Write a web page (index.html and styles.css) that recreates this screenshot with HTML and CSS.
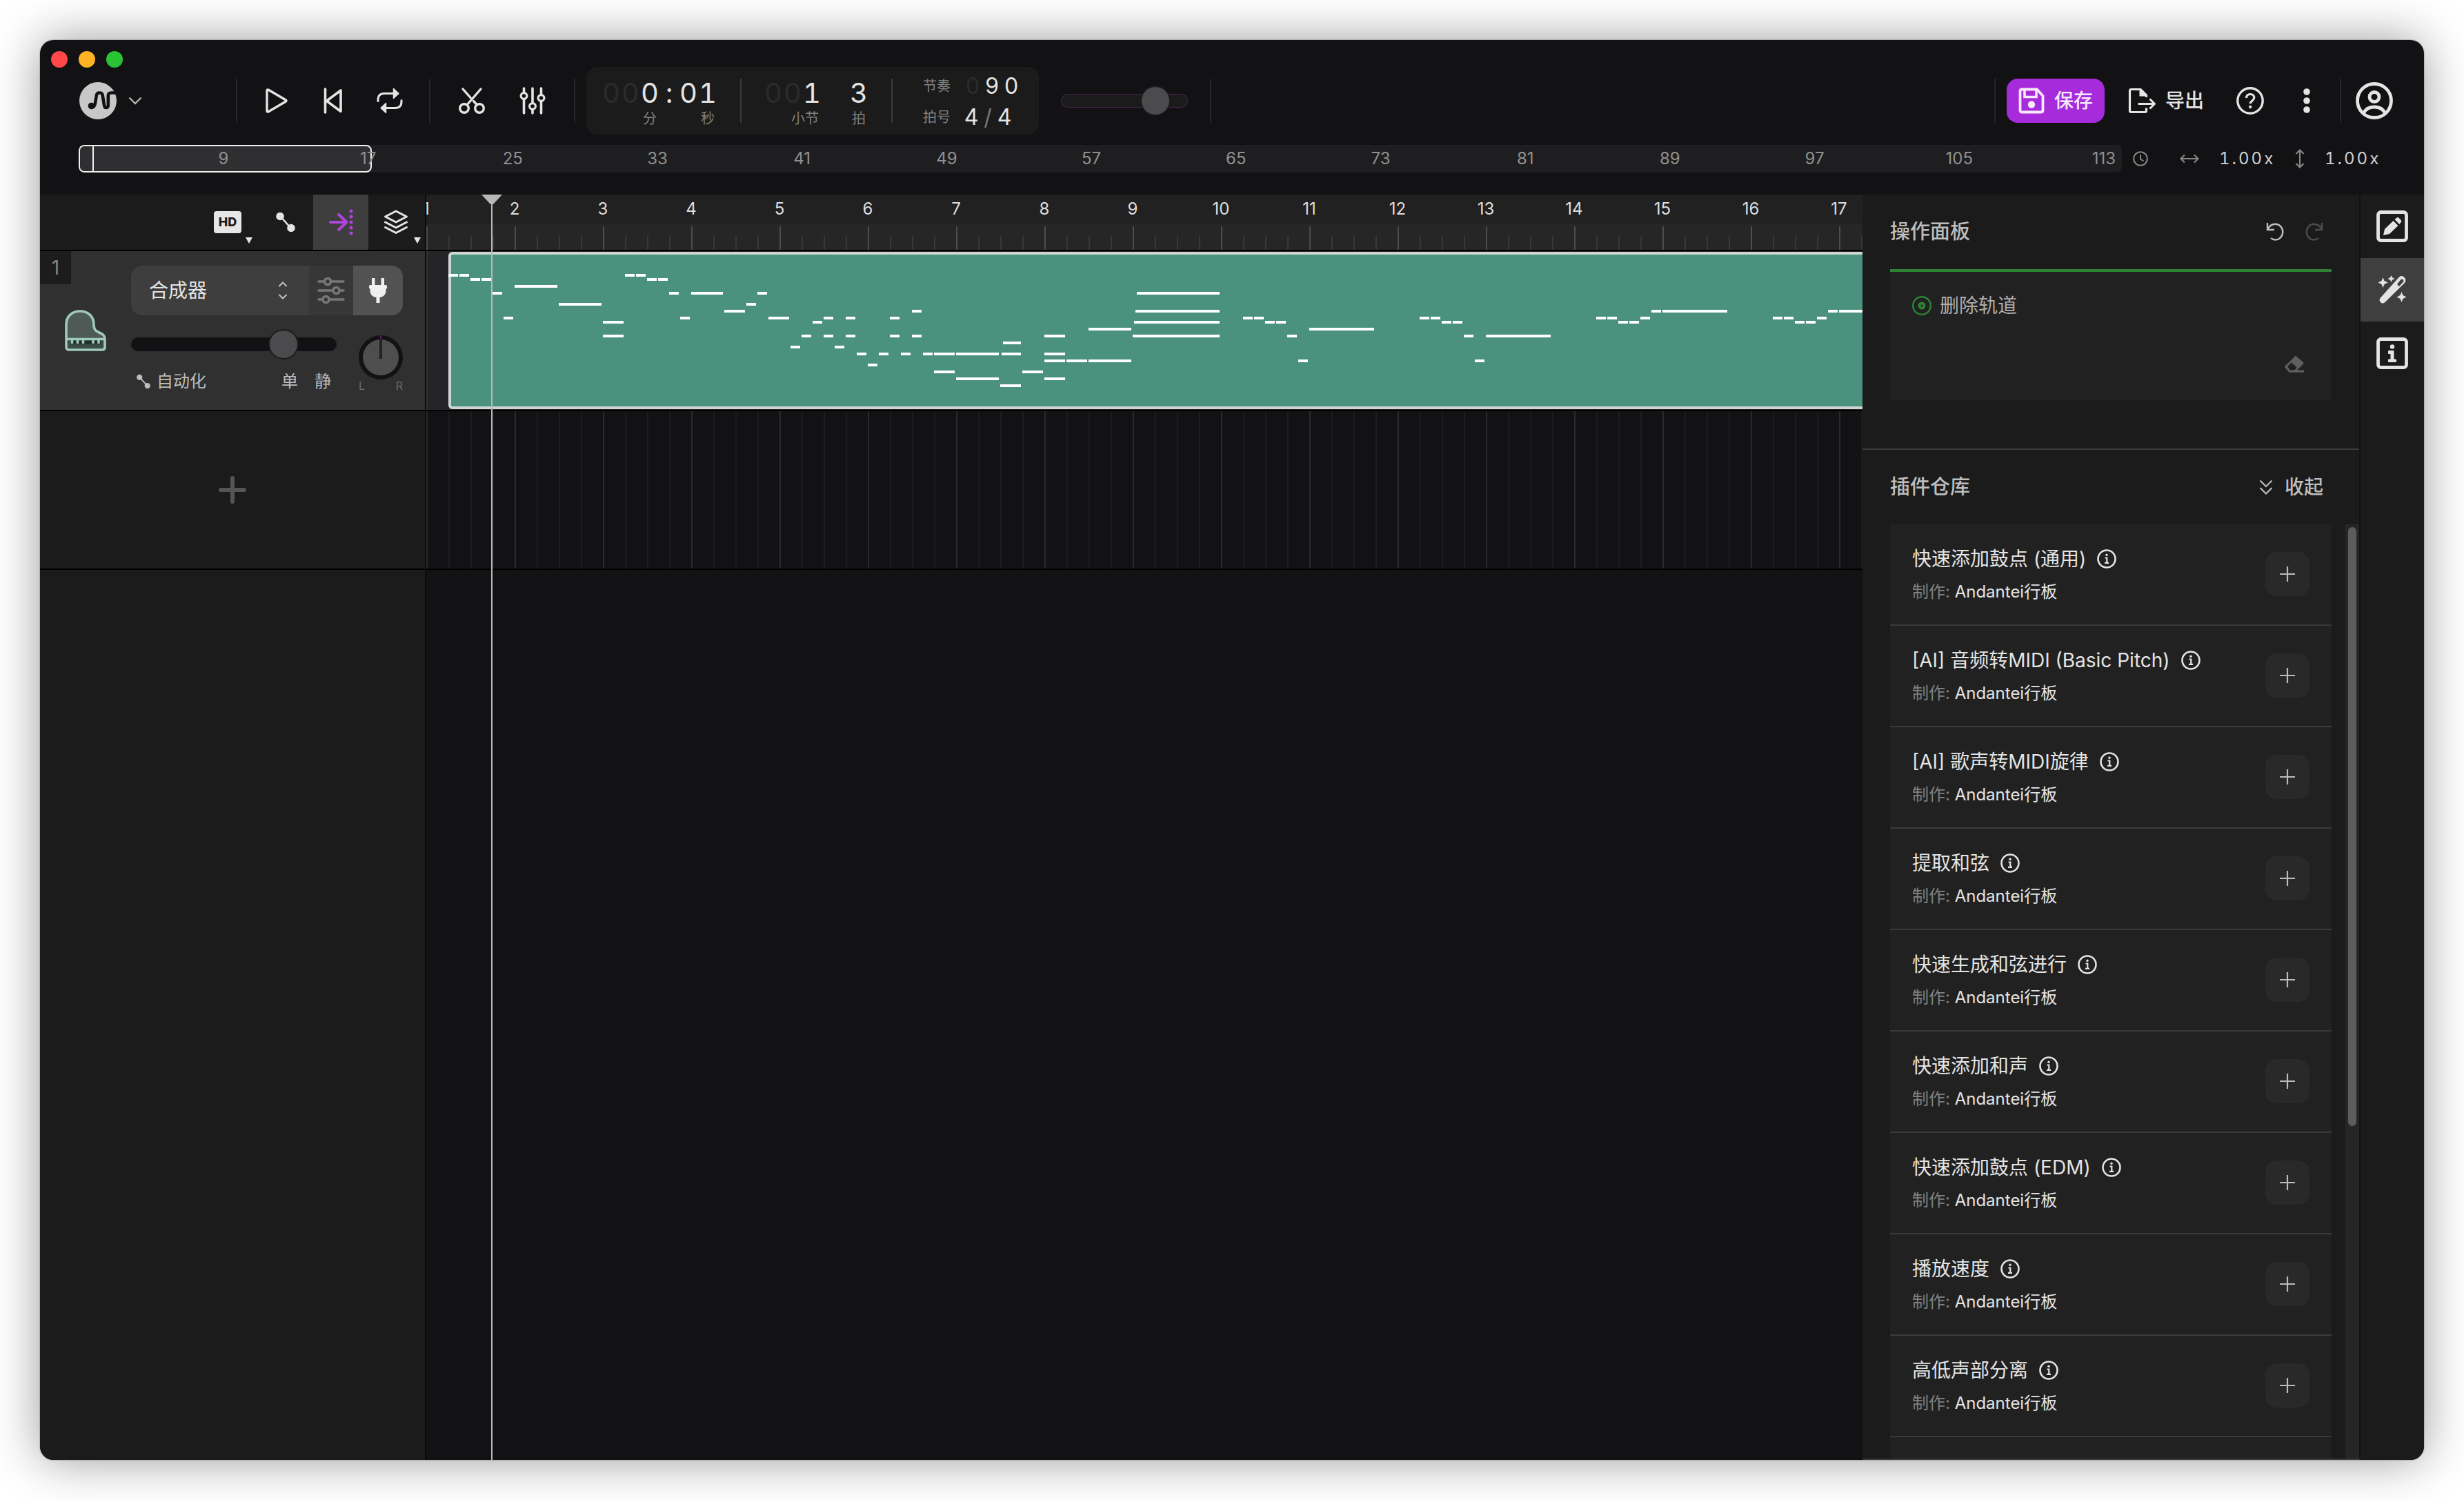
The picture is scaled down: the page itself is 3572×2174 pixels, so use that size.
FILE: index.html
```html
<!DOCTYPE html>
<html lang="zh-CN">
<head>
<meta charset="utf-8">
<title>Studio</title>
<link rel="stylesheet" href="styles.css">
</head>
<body>
<svg width="0" height="0" class="defs" aria-hidden="true">
  <symbol id="i-info" viewBox="0 0 28 28"><circle cx="14" cy="14" r="12.500" fill="none" stroke="currentColor" stroke-width="2.600"/><circle cx="14" cy="8.200" r="1.700" fill="currentColor"/><path d="M11.500 12.500h2.800v7M11 19.800h6" fill="none" stroke="currentColor" stroke-width="2.200"/></symbol>
  <symbol id="i-plus" viewBox="0 0 22 22"><path d="M11 0v22M0 11h22" stroke="currentColor" stroke-width="2.200"/></symbol>
  <symbol id="i-auto" viewBox="0 0 28 30"><path d="M6 6l16 18" stroke="currentColor" stroke-width="2.600"/><circle cx="6" cy="6.500" r="5.800" fill="currentColor"/><circle cx="22" cy="23.500" r="5.800" fill="currentColor"/></symbol>
</svg>
<div class="window">
  <header class="header">
    <div class="lights"><span class="light red"></span><span class="light amber"></span><span class="light green"></span></div>
    <div class="toolbar">
      <button class="brand" aria-label="菜单">
        <svg width="54" height="54" viewBox="0 0 54 54"><circle cx="27" cy="27" r="27" fill="#c8c8c8"/><circle cx="17.500" cy="34.500" r="4.800" fill="#121214"/><path d="M18 36.500c3 0 4.500-2.500 5-6l1.800-11c.5-3 1.600-4 4.500-4s4 1 4.500 4l2.200 14c.3 2.500 1.200 3.500 3 3.500s2.800-1 2.800-3.500V20c0-3.300 1.200-4.500 4.500-4.500H54" fill="none" stroke="#121214" stroke-width="4.600"/></svg>
        <svg width="20" height="12" viewBox="0 0 20 12"><path d="M1.500 1.500L10 10l8.500-8.500" fill="none" stroke="#b4b4b4" stroke-width="2.400"/></svg>
      </button>
      <i class="rule"></i>
      <div class="group transport">
        <button aria-label="播放"><svg width="34" height="38" viewBox="0 0 34 38"><path d="M3 4.500v29q0 2.500 2.300 1.200L30 20.200q2-1.200 0-2.400L5.300 3.300Q3 2 3 4.500z" fill="none" stroke="currentColor" stroke-width="3.400" stroke-linejoin="round"/></svg></button>
        <button aria-label="回到开头"><svg width="28" height="38" viewBox="0 0 28 38"><path d="M2.500 2v34M25 4v30.500L4.500 19.200z" fill="none" stroke="currentColor" stroke-width="3.600" stroke-linejoin="round" stroke-linecap="round"/></svg></button>
        <button aria-label="循环"><svg width="38" height="38" viewBox="0 0 38 38"><g id="half"><path d="M2 19.500V18c0-6 3-9.500 9-9.500h14" fill="none" stroke="currentColor" stroke-width="3" stroke-linecap="round"/><path d="M24.500 1.500L32 8.500l-7.500 7z" fill="currentColor" stroke="currentColor" stroke-width="1.500" stroke-linejoin="round"/></g><use href="#half" transform="rotate(180 19 19)"/></svg></button>
      </div>
      <i class="rule"></i>
      <div class="group tools">
        <button aria-label="剪切"><svg width="38" height="40" viewBox="0 0 38 40"><g fill="none" stroke="currentColor" stroke-width="3.400" stroke-linecap="round"><circle cx="8" cy="31" r="6.300"/><circle cx="30" cy="31" r="6.300"/><path d="M12 26L32 3M6 3l11 12.500M21.500 20.500l5 5.500"/></g></svg></button>
        <button aria-label="混音器"><svg width="38" height="40" viewBox="0 0 38 40"><g stroke="currentColor" stroke-width="3.600" stroke-linecap="round"><path d="M6.500 2v36M19 2v36M31.500 2v36"/><g fill="#121214" stroke-width="3.200"><circle cx="6.500" cy="13" r="4.400"/><circle cx="19" cy="28" r="4.400"/><circle cx="31.500" cy="16" r="4.400"/></g></g></svg></button>
      </div>
      <i class="rule"></i>
      <div class="lcd">
        <div class="readout">
          <div class="col"><div class="digits"><b class="off">0</b><b class="off">0</b><b>0</b></div><span>分</span></div>
          <div class="digits"><b>:</b></div>
          <div class="col"><div class="digits"><b>0</b><b>1</b></div><span>秒</span></div>
        </div>
        <i class="rule"></i>
        <div class="readout bars">
          <div class="col"><div class="digits"><b class="off">0</b><b class="off">0</b><b>1</b></div><span>小节</span></div>
          <div class="col"><div class="digits"><b>3</b></div><span>拍</span></div>
        </div>
        <i class="rule"></i>
        <div class="tempo">
          <div class="pair"><span>节奏</span><div class="digits small"><b class="off">0</b><b>9</b><b>0</b></div></div>
          <div class="pair"><span>拍号</span><div class="digits small meter"><b>4</b><b class="dim">/</b><b>4</b></div></div>
        </div>
      </div>
      <input class="slider master" type="range" min="0" max="100" value="81" aria-label="主音量">
      <i class="rule"></i>
      <span class="spacer"></span>
      <i class="rule"></i>
      <button class="save">
        <svg width="38" height="38" viewBox="0 0 38 38"><path d="M5 2.500h22L35.500 12v21q0 2.500-2.500 2.500H5q-2.500 0-2.500-2.500V5Q2.500 2.500 5 2.500z" fill="none" stroke="currentColor" stroke-width="3.800" stroke-linejoin="round"/><path d="M9 3v10.500h17V3" fill="none" stroke="currentColor" stroke-width="3.600"/><circle cx="19" cy="24.500" r="5.200" fill="currentColor"/></svg>
        <span>保存</span>
      </button>
      <button class="export">
        <svg width="40" height="38" viewBox="0 0 40 38"><path d="M26.500 14V11L18 2.500H4.500q-2 0-2 2v29q0 2 2 2h20q2 0 2-2V29.500" fill="none" stroke="currentColor" stroke-width="3.200" stroke-linejoin="round"/><path d="M16.500 2l10.500 10.500H16.500z" fill="currentColor"/><path d="M14.500 23.500h23M31.500 16.500l7 7-7 7" fill="none" stroke="currentColor" stroke-width="3"/></svg>
        <span>导出</span>
      </button>
      <button class="wide" aria-label="帮助"><svg width="40" height="40" viewBox="0 0 40 40"><circle cx="20" cy="20" r="18.200" fill="none" stroke="currentColor" stroke-width="3.400"/><path d="M14.500 16c0-3.500 2.300-5.500 5.700-5.500s5.600 2 5.600 5.100c0 4.200-5.600 4.400-5.600 8.700" fill="none" stroke="currentColor" stroke-width="3.200"/><circle cx="20.200" cy="29" r="2.200" fill="currentColor"/></svg></button>
      <button class="wide" aria-label="更多"><svg width="12" height="40" viewBox="0 0 12 40"><g fill="currentColor"><circle cx="6" cy="7" r="4.800"/><circle cx="6" cy="20" r="4.800"/><circle cx="6" cy="33" r="4.800"/></g></svg></button>
      <i class="rule"></i>
      <button class="account" aria-label="账号"><svg width="54" height="54" viewBox="0 0 54 54"><g fill="none" stroke="currentColor" stroke-width="4.800"><circle cx="27" cy="27" r="24.500"/><circle cx="27" cy="21.500" r="7"/><path d="M11.500 45c3-6.500 8.500-9 15.500-9s12.500 2.500 15.500 9"/></g></svg></button>
    </div>
    <div class="overview">
      <div class="strip">
        <div class="view"></div>
        <span>9</span><span>17</span><span>25</span><span>33</span><span>41</span><span>49</span><span>57</span><span>65</span><span>73</span><span>81</span><span>89</span><span>97</span><span>105</span><span>113</span>
      </div>
      <svg class="clock" width="22" height="22" viewBox="0 0 22 22"><circle cx="11" cy="11" r="9.800" fill="none" stroke="#858585" stroke-width="2"/><path d="M11 5v6.500l4.500 3" fill="none" stroke="#858585" stroke-width="2"/></svg>
      <div class="zoom"><svg width="28" height="28" viewBox="0 0 28 28"><path d="M1.500 14h25M7 8.500L1.500 14 7 19.500M21 8.500l5.500 5.500-5.500 5.500" fill="none" stroke="#858585" stroke-width="2.200"/></svg><div class="factor"><b>1</b><b>.</b><b>0</b><b>0</b><b>x</b></div></div>
      <div class="zoom"><svg width="14" height="28" viewBox="0 0 14 28"><path d="M7 1.500v25M1.500 7L7 1.500 12.500 7M1.500 21L7 26.500l5.500-5.500" fill="none" stroke="#858585" stroke-width="2.200"/></svg><div class="factor"><b>1</b><b>.</b><b>0</b><b>0</b><b>x</b></div></div>
    </div>
  </header>

  <main class="main">
    <section class="tracks">
      <div class="track-tools">
        <button class="hd" aria-label="音质"><span>HD</span><i class="caret"></i></button>
        <button aria-label="自动化"><svg width="28" height="30"><use href="#i-auto"/></svg></button>
        <button class="active" aria-label="吸附"><svg width="36" height="38" viewBox="0 0 36 38"><path d="M3 19h23M15 8l11.500 11L15 30" fill="none" stroke="currentColor" stroke-width="4" stroke-linecap="round" stroke-linejoin="round"/><g fill="currentColor"><circle cx="33" cy="3" r="2.500"/><circle cx="33" cy="11" r="2.500"/><circle cx="33" cy="19" r="2.500"/><circle cx="33" cy="27" r="2.500"/><circle cx="33" cy="35" r="2.500"/></g></svg></button>
        <button aria-label="图层"><svg width="36" height="36" viewBox="0 0 36 36"><g fill="none" stroke="currentColor" stroke-width="3" stroke-linejoin="round" stroke-linecap="round"><path d="M18 2l15.500 8L18 18 2.500 10z"/><path d="M2.500 18L18 26l15.500-8"/><path d="M2.500 25.500l15.500 8 15.500-8"/></g></svg><i class="caret"></i></button>
      </div>
      <article class="track">
        <div class="number">1</div>
        <svg class="piano" width="60" height="60" viewBox="0 0 60 60"><path d="M2 42V21C2 10 10 2 22 2s20 8 20 19c0 8 2.500 9.500 8 12 5 2.200 8 4 8 9z" fill="#4f5a56"/><path d="M2 42h56v12q0 4-4 4H6q-4 0-4-4z" fill="#3b4d48"/><path d="M8 44h44v6H8z" fill="#22302c"/><g fill="none" stroke="#9fcabb"><path d="M2 54V21C2 10 10 2 22 2s20 8 20 19c0 8 2.500 9.500 8 12 5 2.200 8 4 8 9v12q0 4-4 4H6q-4 0-4-4z" stroke-width="3.600"/><path d="M2 42.500h56" stroke-width="3.400"/><path d="M10.500 42v7M18.500 42v7M26.500 42v7M41 42v7M49 42v7" stroke-width="3.600"/></g></svg>
        <div class="controls">
          <div class="instrument">
            <label class="picker"><select aria-label="乐器"><option>合成器</option></select><svg width="14" height="28" viewBox="0 0 14 28"><path d="M1.500 8L7 2.500 12.500 8M1.500 20L7 25.500l5.500-5.500" fill="none" stroke="#c4c4c4" stroke-width="2"/></svg></label>
            <button class="fx" aria-label="参数"><svg width="40" height="38" viewBox="0 0 40 38"><g stroke="#777" stroke-width="3.600" stroke-linecap="round" fill="#373737"><path d="M2 6h36M2 19h36M2 32h36"/><circle cx="15" cy="6" r="4.500"/><circle cx="27.500" cy="19" r="4.500"/><circle cx="12.500" cy="32" r="4.500"/></g></svg></button>
            <button class="plug" aria-label="插件"><svg width="28" height="38" viewBox="0 0 28 38"><path d="M5.500 1h3.500q.5 0 .5.500V11h9V1.500q0-.5.500-.5h3.500q.5 0 .5.500V11h2q2 0 2 2v2q0 1.500-1.500 1.500v3c0 5-3.500 9-9 9.500v8h-5V29c-5.500-.5-9-4.500-9-9.500v-3Q1 16.500 1 15v-2q0-2 2-2h2V1.500q0-.5.500-.5z" fill="#efefef"/></svg></button>
          </div>
          <div class="mix">
            <div class="levels">
              <input class="slider volume" type="range" min="0" max="100" value="78" aria-label="音量">
              <div class="switches">
                <button class="auto"><svg width="20" height="22"><use href="#i-auto"/></svg>自动化</button>
                <button>单</button><button>静</button>
              </div>
            </div>
            <div class="pan">
              <svg width="64" height="64" viewBox="0 0 64 64"><circle cx="32" cy="32" r="32" fill="#121214"/><circle cx="32" cy="32" r="26" fill="#4e4e4e"/><path d="M32 6v28" stroke="#222" stroke-width="4"/><path d="M32 0v6" stroke="#8a35b0"/></svg>
              <div class="sides"><span>L</span><span>R</span></div>
            </div>
          </div>
        </div>
      </article>
      <button class="add-track" aria-label="添加轨道"><svg width="40" height="40" viewBox="0 0 40 40"><path d="M20 3v34M3 20h34" stroke="#555" stroke-width="6" stroke-linecap="round"/></svg></button>
    </section>

    <section class="timeline">
      <div class="ruler">
        <div class="measures"><span>1</span><span>2</span><span>3</span><span>4</span><span>5</span><span>6</span><span>7</span><span>8</span><span>9</span><span>10</span><span>11</span><span>12</span><span>13</span><span>14</span><span>15</span><span>16</span><span>17</span></div>
        <div class="ticks"></div>
      </div>
      <div class="lane selected">
        <div class="clip">
          <svg width="2144" height="228"><path fill="none" stroke="#fff" stroke-width="4" d="M0 34h14m2 0h14m2 6h14m2 0h14m2 20h14m2 36h14m2-46h62m2 26h62m2 26h30M224 122h30m2-88h14m2 0h14m2 6h14m2 0h14m2 20h14m2 36h14m2-36h46m2 26h30m2-10h14m2-16h14m2 36h30M496 138h14m2-16h14m2-20h14m2-6h14m2 42h14m2-42h14m2 52h14m2 16h14m2-16h14m2-52h14m2 52h14m2-62h14m2 62h14m2 0h30m2 0h62M544 122h14M576 122h14M640 122h14M672 122h14M704 174h30m2 10h62m2 10h30m2-20h30M802 148h28M804 132h26M864 122h30M864 148h30M864 158h30m2 0h30m2 0h62M864 184h30M928 112h62M998 60h120M996 86h122M994 102h124M992 122h126M1152 96h14m2 0h14m2 6h14m2 0h14m2 20h14m2 36h14m2-46h94M1408 96h14m2 0h14m2 6h14m2 0h14m2 20h14m2 36h14m2-36h94M1664 96h14m2 0h14m2 6h14m2 0h14m2-6h14m2-10h14m2 0h94M1920 96h14m2 0h14m2 6h14m2 0h14m2-6h14m2-10h14m2 0h94"/></svg>
        </div>
      </div>
      <div class="lane"></div>
      <div class="playhead"><svg width="30" height="14" viewBox="0 0 30 14"><path d="M0 0h30L17 14h-4z" fill="#b8b8b8"/></svg></div>
    </section>

    <aside class="panel">
      <div class="panel-head">
        <h2>操作面板</h2>
        <div class="history">
          <button aria-label="撤销"><svg width="26" height="28" viewBox="0 0 26 28"><path d="M2 1v10h10M2.500 10.500C5 5 9 2.800 13.500 2.800c6 0 10.800 5 10.800 11.200s-4.800 11.500-10.800 11.500c-2.500 0-5-1-6.500-2.500" fill="none" stroke="#bdbdbd" stroke-width="2.400"/></svg></button>
          <button aria-label="重做"><svg width="26" height="28" viewBox="0 0 26 28"><path d="M24 1v10H14M23.500 10.500C21 5 17 2.800 12.500 2.800c-6 0-10.800 5-10.800 11.200s4.800 11.500 10.800 11.500c2.500 0 5-1 6.500-2.500" fill="none" stroke="#4c4c4c" stroke-width="2.400"/></svg></button>
        </div>
      </div>
      <div class="log">
        <div class="entry"><svg width="28" height="28" viewBox="0 0 28 28"><circle cx="14" cy="14" r="12.800" fill="none" stroke="#2e8234" stroke-width="2.400"/><circle cx="14" cy="14" r="3.500" fill="none" stroke="#2e8234" stroke-width="4"/></svg><span>删除轨道</span></div>
        <button class="erase" aria-label="清除"><svg width="28" height="25" viewBox="0 0 28 25"><path fill-rule="evenodd" d="M16 .6l11 9.600q1.200 1 0 2.300L18 21.500h10v3.200H6.500L.7 17.800q-1-1.300.2-2.500zM9.800 10.300L4 16.200l4 5.300h6l4-3.600z" fill="#5f5f5f"/></svg></button>
      </div>
      <div class="store">
        <div class="store-head">
          <h2>插件仓库</h2>
          <button class="fold"><svg width="20" height="22" viewBox="0 0 20 22"><path d="M1.500 1.500L10 10l8.500-8.500M1.500 12l8.500 8.500 8.500-8.500" fill="none" stroke="#bdbdbd" stroke-width="2.200"/></svg>收起</button>
        </div>
        <div class="scroll">
          <ul class="plugins">
            <li><div class="meta"><h3>快速添加鼓点 (通用)<svg><use href="#i-info"/></svg></h3><p>制作: <em>Andantei行板</em></p></div><button aria-label="添加"><svg><use href="#i-plus"/></svg></button></li>
            <li><div class="meta"><h3>[AI] 音频转MIDI (Basic Pitch)<svg><use href="#i-info"/></svg></h3><p>制作: <em>Andantei行板</em></p></div><button aria-label="添加"><svg><use href="#i-plus"/></svg></button></li>
            <li><div class="meta"><h3>[AI] 歌声转MIDI旋律<svg><use href="#i-info"/></svg></h3><p>制作: <em>Andantei行板</em></p></div><button aria-label="添加"><svg><use href="#i-plus"/></svg></button></li>
            <li><div class="meta"><h3>提取和弦<svg><use href="#i-info"/></svg></h3><p>制作: <em>Andantei行板</em></p></div><button aria-label="添加"><svg><use href="#i-plus"/></svg></button></li>
            <li><div class="meta"><h3>快速生成和弦进行<svg><use href="#i-info"/></svg></h3><p>制作: <em>Andantei行板</em></p></div><button aria-label="添加"><svg><use href="#i-plus"/></svg></button></li>
            <li><div class="meta"><h3>快速添加和声<svg><use href="#i-info"/></svg></h3><p>制作: <em>Andantei行板</em></p></div><button aria-label="添加"><svg><use href="#i-plus"/></svg></button></li>
            <li><div class="meta"><h3>快速添加鼓点 (EDM)<svg><use href="#i-info"/></svg></h3><p>制作: <em>Andantei行板</em></p></div><button aria-label="添加"><svg><use href="#i-plus"/></svg></button></li>
            <li><div class="meta"><h3>播放速度<svg><use href="#i-info"/></svg></h3><p>制作: <em>Andantei行板</em></p></div><button aria-label="添加"><svg><use href="#i-plus"/></svg></button></li>
            <li><div class="meta"><h3>高低声部分离<svg><use href="#i-info"/></svg></h3><p>制作: <em>Andantei行板</em></p></div><button aria-label="添加"><svg><use href="#i-plus"/></svg></button></li>
            <li></li>
          </ul>
          <div class="bar"><div class="thumb"></div></div>
        </div>
      </div>
    </aside>

    <nav class="rail">
      <button aria-label="编辑"><svg width="46" height="46" viewBox="0 0 46 46"><rect x="2.500" y="2.500" width="41" height="41" rx="4" fill="none" stroke="currentColor" stroke-width="4.800"/><path d="M10 36l2-9L24.500 15l7 7L19 34zM26.500 13l3-2.500q1.500-1 3 .3l3 3q1.500 1.700.3 3.200l-2.500 3z" fill="currentColor"/></svg></button>
      <button class="active" aria-label="插件"><svg width="42" height="42" viewBox="0 0 42 42"><path fill-rule="evenodd" d="M31 2.500q4-3 7.500.5t.5 8L10.500 39q-3.500 3-6.500 0t0-6.500zM28 13l3 3 6-6.500q1-2-.3-3.200T33.500 6z" fill="currentColor"/><path d="M7.500 3l2 5 5 2.500-5 2.500-2 5-2-5-5-2.500 5-2.500zM19.500 0l1.500 3.200 3.500 1.800L21 6.800 19.500 10 18 6.800 14.500 5 18 3.200zM34.500 24l2 5 5 2.500-5 2.500-2 5-2-5-5-2.500 5-2.500z" fill="currentColor"/></svg></button>
      <button aria-label="信息"><svg width="46" height="46" viewBox="0 0 46 46"><rect x="2.500" y="2.500" width="41" height="41" rx="4" fill="none" stroke="currentColor" stroke-width="4.800"/><circle cx="23" cy="13.500" r="3.200" fill="currentColor"/><path d="M17 20q0-1 1-1h6.500q1 0 1 1v11.500H28q1 0 1 1V35q0 1-1 1H18q-1 0-1-1v-2.500q0-1 1-1h2.500V24H18q-1 0-1-1z" fill="currentColor"/></svg></button>
    </nav>
  </main>
</div>
</body>
</html>
```
FILE: styles.css
```css
* { box-sizing: border-box; }

body {
  margin: 0;
  padding: 58px;
  min-height: 100vh;
  background: #fff;
  color: #e4e4e4;
  font: 24px/32px Inter, "Noto Sans CJK SC", sans-serif;
  overflow: hidden;
}

.defs { position: absolute; }

svg { display: block; flex: none; }

button, select, input { font: inherit; color: inherit; }

button {
  display: flex;
  align-items: center;
  justify-content: center;
  margin: 0;
  padding: 0;
  border: 0;
  background: none;
}

h2, h3, p, ul { margin: 0; padding: 0; font-weight: 400; }
b { font-weight: 400; }
em { font-style: normal; }

.window {
  display: flex;
  flex-direction: column;
  height: calc(100vh - 116px);
  border-radius: 20px;
  background: #121214;
  overflow: hidden;
  box-shadow: 0 0 70px rgba(0, 0, 0, .4), 0 0 2px rgba(0, 0, 0, .5);
}

/* header */
.header { flex: none; padding-bottom: 32px; }

.lights { display: flex; gap: 16px; padding: 16px 0 0 16px; }
.light { width: 24px; height: 24px; border-radius: 50%; }
.red { background: #ff4747; }
.amber { background: #ffb224; }
.green { background: #29c333; }

.toolbar { display: flex; align-items: center; height: 96px; }
.rule { flex: none; width: 2px; height: 64px; background: #262628; }
.brand { width: 284px; padding-left: 57px; justify-content: flex-start; gap: 17px; }
.group { display: flex; padding: 0 16px; }
.transport button { width: 82px; height: 64px; }
.tools button { width: 88px; height: 64px; }
.spacer { flex: 1; }

.lcd {
  display: flex;
  align-items: center;
  width: 656px;
  height: 98px;
  margin-left: 16px;
  border-radius: 16px;
  background: #1b1b1b;
}
.lcd .rule { background: #3a3a3a; }
.lcd span { color: #808080; font-size: 20px; line-height: 24px; }
.readout { display: flex; padding: 6px 33px 0 22px; }
.bars { gap: 40px; padding-left: 32px; }
.col { display: flex; flex-direction: column; align-items: flex-end; gap: 5px; }
.col span { padding-right: 4px; }
.digits { display: flex; font-size: 40px; line-height: 40px; font-variant-numeric: tabular-nums; }
.digits b { width: 28px; text-align: center; }
.digits .off { color: #2b2b2b; }
.digits .dim { color: #777; }
.tempo { flex: 1; padding: 2px 0 0 44px; }
.pair { display: flex; align-items: center; gap: 18px; height: 45px; }
.small { font-size: 32px; }
.meter b { width: 24px; }

.slider { appearance: none; display: block; height: 40px; margin: 0; background: none; }
.slider::-webkit-slider-runnable-track { height: 20px; border-radius: 10px; background: #121214; }
.slider::-webkit-slider-thumb {
  appearance: none;
  width: 40px;
  height: 40px;
  margin-top: -10px;
  border-radius: 50%;
  background: #4b4b4d;
  box-shadow: 0 0 0 2px #1b1b1c;
}
.master { width: 184px; margin: 0 32px; }
.master::-webkit-slider-runnable-track { background: #1b1b1b; box-shadow: inset 0 0 0 1px #4b2458; }
.volume { width: 298px; }

.save {
  width: 142px;
  height: 64px;
  margin-left: 16px;
  gap: 14px;
  border-radius: 16px;
  background: #a62bdb;
  color: #f8e9ff;
  font-size: 28px;
  font-weight: 500;
}
.export { gap: 14px; padding: 0 26px 0 34px; font-size: 28px; font-weight: 500; }
.wide { width: 82px; height: 64px; }
.wide + .rule { margin-left: 7px; }
.account { margin: 0 45px 0 21px; }

.overview { display: flex; align-items: center; margin-top: 16px; padding: 0 70px 0 56px; }
.strip {
  position: relative;
  display: flex;
  flex: 1;
  height: 40px;
  padding-left: 105px;
  border-radius: 8px;
  background: #1e1e20;
  color: #909090;
  line-height: 40px;
  overflow: hidden;
}
.strip span { position: relative; flex: 0 0 7.34%; text-align: center; }
.view {
  position: absolute;
  left: 0;
  top: 0;
  width: 425px;
  height: 40px;
  border: 2px solid #f0f0f0;
  border-radius: 8px;
  background: linear-gradient(90deg, transparent 18px, #f0f0f0 18px 20px, transparent 20px), #2f2f31;
}
.clock { margin: 0 10px 0 16px; }
.zoom { display: flex; align-items: center; gap: 29px; margin-left: 36px; }
.factor { display: flex; gap: 3px; width: 74px; color: #d0d0d0; font-variant-numeric: tabular-nums; }

/* main columns */
.main { display: flex; flex: 1; min-height: 0; }

.tracks { flex: none; width: 560px; border-right: 2px solid #0a0a0a; background: #1b1b1b; }
.track-tools {
  display: flex;
  justify-content: flex-end;
  height: 82px;
  padding-right: 2px;
  border-bottom: 2px solid #000;
}
.track-tools button { position: relative; width: 80px; }
.track-tools .hd { margin-right: 4px; }
.hd span {
  width: 40px;
  height: 32px;
  border-radius: 4px;
  background: #e6e6e6;
  color: #1b1b1b;
  font-size: 18px;
  font-weight: 800;
  line-height: 32px;
  text-align: center;
}
.track-tools .active { background: #3e3e3e; color: #b143de; }
.caret {
  position: absolute;
  right: 4px;
  bottom: 9px;
  border: 5px solid transparent;
  border-top: 9px solid #e6e6e6;
  border-bottom: 0;
}

.track {
  display: flex;
  align-items: flex-start;
  height: 232px;
  border-bottom: 2px solid #000;
  background: #303030;
}
.number {
  width: 45px;
  height: 48px;
  margin-right: -9px;
  background: #1c1c1c;
  color: #858585;
  font-size: 28px;
  line-height: 48px;
  text-align: center;
}
.piano { margin: 85px 36px 0 0; }
.controls { flex: none; width: 394px; padding-top: 21px; }
.instrument { display: flex; height: 72px; border-radius: 16px; overflow: hidden; }
.picker { position: relative; flex: 1; background: #3e3e3e; }
.picker select {
  appearance: none;
  width: 100%;
  height: 72px;
  padding: 0 26px;
  border: 0;
  background: none;
  font-size: 28px;
}
.picker svg { position: absolute; right: 31px; top: 22px; pointer-events: none; }
.fx { width: 64px; background: #373737; }
.plug { width: 72px; background: #525252; }
.mix { display: flex; justify-content: space-between; }
.levels { padding-top: 22px; }
.switches { display: flex; gap: 24px; margin-top: 18px; padding: 0 8px; color: #bdbdbd; }
.switches .auto { gap: 9px; margin-right: auto; }
.pan { padding-top: 29px; }
.sides { display: flex; justify-content: space-between; color: #6a6a6a; font-size: 16px; line-height: 18px; }

.add-track { width: 100%; height: 230px; border-bottom: 2px solid #000; }

.timeline { position: relative; flex: 1; min-width: 0; overflow: hidden; }
.ruler { border-bottom: 2px solid #000; background: #212121; }
.measures { display: flex; height: 42px; margin-left: -64px; line-height: 42px; color: #dedede; overflow: hidden; }
.measures span { flex: 0 0 128px; text-align: center; }
.ticks {
  height: 38px;
  background:
    repeating-linear-gradient(90deg, #4d4d4d 0 2px, transparent 2px 128px) 0 4px no-repeat,
    repeating-linear-gradient(90deg, #383838 0 2px, transparent 2px 32px) 0 18px no-repeat,
    #262626;
}
.lane {
  height: 230px;
  border-bottom: 2px solid #000;
  background:
    repeating-linear-gradient(90deg, #2a2a2c 0 2px, transparent 2px 128px),
    repeating-linear-gradient(90deg, #1c1c1e 0 2px, transparent 2px 32px),
    #121214;
}
.selected {
  height: 232px;
  padding: 1px 0 0 32px;
  background: linear-gradient(90deg, #343436 2px, #252528 2px);
  overflow: hidden;
}
.clip {
  width: 2144px;
  height: 228px;
  border-radius: 6px;
  background: #4a917e;
  box-shadow: inset 0 0 0 4px #cdd6d3;
}
.playhead { position: absolute; left: 80px; top: 0; bottom: 0; background: linear-gradient(#b8b8b8, #b8b8b8) 14px 0 / 2px 100% no-repeat; }

/* right panel */
.panel { display: flex; flex-direction: column; flex: none; width: 722px; border-right: 2px solid #121214; border-bottom: 2px solid #3a3a3a; background: #1b1b1b; }
.panel h2, .fold { color: #bdbdbd; font-size: 28px; font-weight: 500; line-height: 40px; }
.panel h2 { font-size: 29px; }
.panel-head, .store-head { display: flex; align-items: center; justify-content: space-between; height: 108px; padding: 0 52px 0 40px; }
.history { display: flex; gap: 31px; }
.log {
  display: flex;
  flex-direction: column;
  flex: none;
  height: 190px;
  margin: 0 40px;
  padding: 29px 40px 40px 32px;
  border-top: 4px solid #2e8234;
  background: #212121;
}
.entry { display: flex; align-items: center; gap: 12px; color: #adadad; font-size: 28px; line-height: 40px; }
.erase { margin: auto 0 0 auto; }
.store { display: flex; flex-direction: column; flex: 1; min-height: 0; margin-top: 70px; border-top: 2px solid #3b3b3b; }
.store-head { flex: none; }
.fold { gap: 17px; }
.scroll { display: flex; flex: 1; min-height: 0; padding-left: 40px; overflow: hidden; }
.plugins { flex: 1; margin-right: 20px; background: #212121; list-style: none; }
.plugins li {
  display: flex;
  justify-content: space-between;
  height: 147px;
  padding: 30px 32px 0;
  border-bottom: 2px solid #3a3a3a;
}
.plugins h3 { display: flex; align-items: center; gap: 16px; font-size: 28px; line-height: 40px; }
.plugins h3 svg { width: 28px; height: 28px; }
.plugins p { margin-top: 12px; color: #808080; }
.plugins em { color: #e4e4e4; }
.plugins button { width: 64px; height: 64px; margin-top: 10px; border-radius: 16px; background: #292929; color: #bcbcbc; }
.plugins button svg { width: 22px; height: 22px; }
.bar { width: 20px; padding: 4px; background: #262626; }
.thumb { height: 64.5%; border-radius: 6px; background: #5c5c5c; }

.rail { flex: none; width: 92px; background: #1b1b1b; }
.rail button { width: 92px; height: 92px; }
.rail .active { background: #3f3f3f; }
```
